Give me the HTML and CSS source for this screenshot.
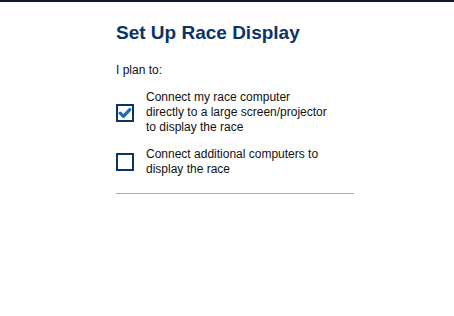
FILE: index.html
```html
<!DOCTYPE html>
<html lang="en">
<head>
  <meta charset="UTF-8" />
  <title>Set Up Race Display</title>
  <link rel="stylesheet" href="styles.css">
</head>
<body>

<div class="topbar"></div>

<div class="setup">
  <h1>Set Up Race Display</h1>
  <p class="intro">I plan to:</p>

  <label class="option">
    <span class="box">
      <svg viewBox="0 0 14 14" width="14" height="14">
        <path d="M2.2 7.2 L5.5 10.4 L11.8 3.6" fill="none" stroke="#1a6cb6" stroke-width="3.2" stroke-linecap="round" stroke-linejoin="round"/>
      </svg>
    </span>
    <span class="text">Connect my race computer<br>directly to a large screen/projector to display the race</span>
  </label>

  <label class="option">
    <span class="box"></span>
    <span class="text">Connect additional computers to display the race</span>
  </label>

  <hr class="divider">
</div>

</body>
</html>
```

FILE: styles.css
```css
* {
  box-sizing: border-box;
}

body {
  margin: 0;
  font-family: "Liberation Sans", Arial, sans-serif;
  background: #fff;
  color: #111;
}

.topbar {
  height: 2px;
  background: #101a26;
}

.setup {
  width: 238px;
  margin-left: 116px;
  padding-top: 19px;
}

.setup h1 {
  margin: 0;
  font-size: 19px;
  font-weight: bold;
  color: #0b3466;
  line-height: 24px;
}

.intro {
  margin: 18px 0 12px;
  font-size: 12px;
  line-height: 15px;
}

.option {
  display: flex;
  align-items: center;
  gap: 12px;
  font-size: 12px;
  line-height: 15px;
  margin-bottom: 12px;
}

.box {
  flex: none;
  width: 18px;
  height: 18px;
  border: 2px solid #0b3466;
  display: flex;
  align-items: center;
  justify-content: center;
}

.text {
  width: 190px;
}

.divider {
  margin: 16px 0 0;
  border: none;
  border-top: 1px solid #aaaaaa;
}
```
